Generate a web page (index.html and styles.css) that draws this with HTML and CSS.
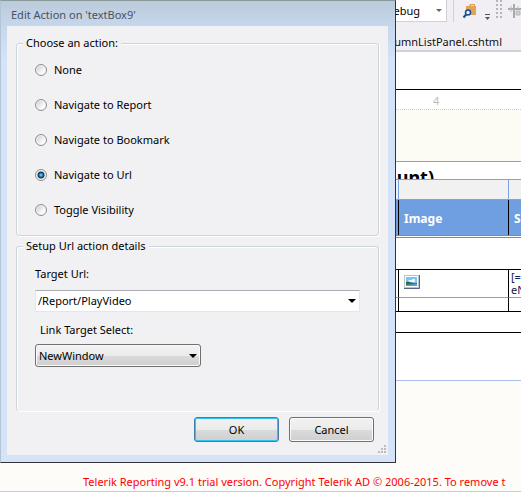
FILE: index.html
```html
<!DOCTYPE html>
<html lang="en">
<head>
<meta charset="utf-8">
<title>Edit Action on 'textBox9'</title>
<link rel="stylesheet" href="styles.css">
</head>
<body>
<main class="designer">
  <header class="toolbar">
    <button class="config" type="button">Debug<i class="arrow small"></i></button>
    <span class="rule"></span>
    <button class="tool find" type="button" aria-label="Find in files">
      <svg width="16" height="16" viewBox="0 0 16 16"><path d="M4 3h3l1-2h5v2h1v9H4z" fill="#dfa45a"/><path d="M9 2.500h3" stroke="#f6dfbd"/><path d="M5 10.500 1.500 14.500" stroke="#164f91" stroke-width="2"/><circle cx="6" cy="9.500" r="2.500" fill="#eef" stroke="#164f91" stroke-width="1.500"/></svg>
    </button>
    <button class="tool more" type="button" aria-label="Toolbar options">
      <svg width="7" height="8" viewBox="0 0 7 8"><path d="M1 1.500h5" stroke="#555"/><path d="M1 4h5L3.500 7z" fill="#555"/></svg>
    </button>
    <span class="grip"></span>
    <button class="tool" type="button" aria-label="Align">
      <svg width="16" height="16" viewBox="0 0 16 16"><path d="M1 6h15M7 1v14" stroke="#aaa" stroke-width="2"/><path d="M9 8h4v4H9zM4 3v6M11 3v3" stroke="#bbb" fill="#ccc"/></svg>
    </button>
  </header>
  <nav class="tabs"><a href="#report">ColumnListPanel.cshtml</a></nav>
  <div class="blank"></div>
  <div class="ruler"><span>4</span></div>
  <div class="canvas"></div>
  <h1 class="heading">Count)</h1>
  <table class="grid" id="report">
    <colgroup><col><col class="image-col"><col class="last-col"></colgroup>
    <thead>
      <tr class="handles"><td></td><td></td><td></td></tr>
      <tr class="titles"><th></th><th>Image</th><th>S</th></tr>
    </thead>
    <tbody>
      <tr class="spacer"><td colspan="3"></td></tr>
      <tr class="detail"><td></td><td>
        <svg width="16" height="14" viewBox="0 0 16 14"><path d="M0 0h15v13H0z" fill="#b9c4cf"/><path d="M1 1h13v11H1z" fill="#fff"/><path d="M2 2h11v9H2z" fill="#7fc4ee"/><path d="M4 5h4v-1h3v3H6z" fill="#e8f8ff"/><path d="M2 7c4-1 6 2 11 1v3H2z" fill="#2d6b4d"/><path d="M2 10c4-1 7-1 11-1v2H2z" fill="#5c9fc0"/><path d="M15.500 0v13.500H0" fill="none" stroke="#536783"/></svg>
      </td><td>[=<br>eN</td></tr>
      <tr class="sub"><td></td><td></td><td></td></tr>
    </tbody>
  </table>
  <div class="footer-band"></div>
  <div class="page-end"></div>
  <p class="trial">Telerik Reporting v9.1 trial version. Copyright Telerik AD © 2006-2015. To remove t</p>
</main>

<form class="dialog" role="dialog" aria-labelledby="dialog-title">
  <h2 class="title" id="dialog-title">Edit Action on 'textBox9'</h2>
  <div class="body">
    <fieldset class="group actions">
      <legend>Choose an action:</legend>
      <label><input type="radio" name="action">None</label>
      <label><input type="radio" name="action">Navigate to Report</label>
      <label><input type="radio" name="action">Navigate to Bookmark</label>
      <label><input type="radio" name="action" checked>Navigate to Url</label>
      <label><input type="radio" name="action">Toggle Visibility</label>
    </fieldset>
    <fieldset class="group details">
      <legend>Setup Url action details</legend>
      <label for="url">Target Url:</label>
      <div class="combo"><input id="url" type="text" value="/Report/PlayVideo"><button type="button" aria-label="Show expressions"><i class="arrow"></i></button></div>
      <label class="indent" for="target">Link Target Select:</label>
      <div class="dropdown"><select id="target"><option>NewWindow</option></select><i class="arrow"></i></div>
    </fieldset>
    <div class="buttons">
      <button class="push default" type="button">OK</button>
      <button class="push" type="button">Cancel</button>
    </div>
  </div>
  <svg class="resize" width="9" height="9" viewBox="0 0 9 9"><path d="M6 0h2v2H6zM3 3h2v2H3zM6 3h2v2H6zM0 6h2v2H0zM3 6h2v2H3zM6 6h2v2H6z" fill="#bcbcc0"/></svg>
</form>
</body>
</html>
```
FILE: styles.css
```css
* { box-sizing: border-box; }

:root { --line: #7ba2e8; }

body {
  margin: 0;
  font: 11px/16px "Noto Sans", "Open Sans", sans-serif;
  color: #000;
  background: #fdfcf8;
  overflow: hidden;
}

button, input, select { font: inherit; color: inherit; }

.arrow {
  width: 0;
  border: 4px solid transparent;
  border-top-color: #000;
  border-bottom: 0;
}

.arrow.small { border-width: 3px 3px 0; border-top-color: #666; }

/* Report designer */
.designer { min-height: 100vh; }

.toolbar {
  display: flex;
  justify-content: flex-end;
  height: 25px;
  background: #f1eff3;
}

.config {
  display: flex;
  align-items: center;
  gap: 16px;
  height: 22px;
  padding: 0 4px;
  border: 1px solid #d0d0d8;
  border-top: 0;
  background: #fff;
}

.rule { width: 1px; height: 22px; margin: 0 8px 0 6px; background: #d0d0d8; }

.tool { flex: none; width: 14px; height: 20px; padding: 2px 0 0; border: 0; background: none; overflow: hidden; }
.tool svg { display: block; }
.tool.more { width: 8px; margin: 6px 4px 0 6px; }
.tool.find { width: 16px; }

.grip {
  width: 7px;
  height: 20px;
  margin-right: 4px;
  background: radial-gradient(circle at 1px 1px, #b4b4bc 1px, transparent 1px) 0 0 / 4px 4px;
}

.tabs {
  display: flex;
  justify-content: flex-end;
  align-items: flex-end;
  height: 27px;
  padding: 0 19px 0 0;
  border-bottom: 2px solid #d0d0d6;
  background: #f1eff3;
}

.tabs a { color: #111; text-decoration: none; }

.blank { height: 38px; border-bottom: 1px solid #000; background: #fff; }

.ruler {
  height: 20px;
  padding: 3px 0 0 calc(100% - 88px);
  border-bottom: 1px dotted #ccc;
  background: #fff;
  color: #bbb;
}

.canvas { height: 52px; border-bottom: 1px solid var(--line); background: #fdfcf4; }

.heading {
  height: 17px;
  margin: 0;
  padding: 3px 87px 0 0;
  overflow: hidden;
  background: #fff;
  font-size: 18px;
  line-height: 24px;
  text-align: right;
}

.grid { width: 100%; table-layout: fixed; border-collapse: separate; border-spacing: 0; background: #fff; }
.image-col { width: 110px; }
.last-col { width: 13px; }
.grid td, .grid th { padding: 0; overflow: hidden; text-align: left; }

.handles td { height: 21px; border: solid var(--line); border-width: 1px 0 1px 1px; background: #f1f1f1; }

.titles th {
  height: 35px;
  padding: 2px 5px 0;
  border-left: 1px solid #000;
  background: #6f9fe0;
  color: #fff;
  font-size: 12px;
}

.spacer td { height: 35px; border-top: 3px double #5b8de0; border-bottom: 1px solid #000; }

.detail td {
  height: 28px;
  padding: 0 2px;
  border-left: 1px solid #000;
  border-bottom: 1px solid var(--line);
  line-height: 13px;
  color: #102050;
  vertical-align: top;
}

.detail td:nth-child(2) { padding: 5px 5px 0; }
.detail svg { display: block; }
.sub td { height: 14px; border-left: 1px solid #000; border-bottom: 1px solid #000; }

.footer-band { height: 21px; border-bottom: 1px solid #000; background: #fff; }
.page-end { height: 48px; border-bottom: 1px solid #aabfee; background: #fff; }

.trial {
  margin: 0;
  padding: 93px 0 1px 83px;
  border-bottom: 1px solid #ccc;
  color: #f00;
  white-space: nowrap;
}

/* Dialog window */
.dialog {
  position: absolute;
  top: 0;
  left: 0;
  width: calc(100% - 125px);
  padding: 0 7px 7px 6px;
  border: 1px solid #333;
  border-top-color: #899;
  border-left-color: #b4c4d4;
  background: linear-gradient(#bccbd9, #c6d8ee 26px, #d4e3f7 60px);
}

.title {
  height: 25px;
  margin: 0;
  padding: 6px 4px 0;
  font-size: 11px;
  font-weight: 400;
  line-height: 16px;
  color: #485260;
}

.body { padding: 9px; background: #f1f0f2; }

.group {
  display: flex;
  flex-direction: column;
  min-width: 0;
  margin: 0;
  padding: 0 18px;
  border: 1px solid #cdd5dc;
  border-radius: 3px;
  box-shadow: 1px 1px #fff, inset 1px 1px #fff;
}

.group legend { margin-left: -12px; padding: 0 3px; background: #f1f0f2; }

.actions { gap: 19px; padding-top: 11px; padding-bottom: 17px; }
.actions label { display: flex; align-items: center; gap: 7px; }

.actions input {
  appearance: none;
  width: 12px;
  height: 12px;
  margin: 0;
  border: 1px solid #8e8f8f;
  border-radius: 50%;
  background: linear-gradient(135deg, #c5c8cc, #fff 75%);
  box-shadow: inset 0 0 0 1px #f4f4f4;
}

.actions input:checked { background: radial-gradient(circle at 5px 5px, #8fe0ff, #1b6f9f 2px, #0b2a4c 3px, #e4e8ea 4px); }

.details { margin-top: 2px; padding-top: 12px; padding-bottom: 44px; border-bottom: 0; }
.details .indent { margin: 10px 0 6px; padding-left: 5px; }

.combo {
  display: flex;
  height: 22px;
  margin-top: 8px;
  border: 1px solid #e3e6ea;
  border-top-color: #abadb3;
  background: #fff;
}

.combo input { flex: 1; min-width: 0; padding: 0 2px; border: 0; background: none; outline: 0; }
.combo button { display: flex; align-items: center; padding: 0 3px; border: 0; background: none; }

.dropdown { display: grid; width: 166px; align-items: center; }
.dropdown > * { grid-area: 1 / 1; }
.dropdown .arrow { justify-self: end; margin-right: 4px; pointer-events: none; }

.dropdown select, .push {
  border: 1px solid #707070;
  border-radius: 3px;
  background: linear-gradient(#f2f2f2, #ebebeb 50%, #dbdbdb 50%, #cfcfcf);
  box-shadow: inset 0 0 0 1px #fafafa;
}

.dropdown select { appearance: none; height: 23px; padding: 0 3px; }

.buttons { display: flex; justify-content: flex-end; gap: 10px; padding: 6px 5px 4px 0; }
.push { width: 85px; height: 25px; padding: 0; }
.push.default { border-color: #3c7fb1; box-shadow: inset 0 0 0 1px #2fc4f2; }

.resize { position: absolute; right: 8px; bottom: 8px; }
```
